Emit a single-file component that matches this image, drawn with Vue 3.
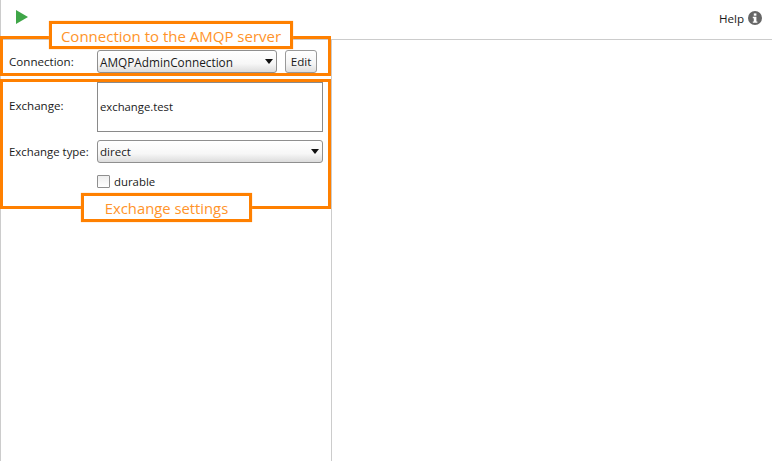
<script setup>
</script>

<template>
  <div class="app">
    <header class="toolbar">
      <svg class="play" width="14" height="16" viewBox="0 0 14 16"><path d="M1 1 L13 8 L1 15 Z" fill="#3fa648" /></svg>
      <div class="help">
        <span>Help</span>
        <svg width="14" height="14" viewBox="0 0 14 14">
          <circle cx="7" cy="7" r="7" fill="#666" />
          <rect x="5.8" y="2.4" width="2.6" height="2.3" fill="#fff" />
          <path d="M4.8 5.8h3.6v4.6h1v1.4H4.8v-1.4h1V7.2h-1z" fill="#fff" />
        </svg>
      </div>
    </header>
    <div class="body">
      <aside class="side">
        <div class="row conn">
          <label class="lbl">Connection:</label>
          <div class="combo short"><span>AMQPAdminConnection</span><i class="arrow"></i></div>
          <button class="edit">Edit</button>
        </div>
        <div class="row exch">
          <label class="lbl">Exchange:</label>
          <div class="field">exchange.test</div>
        </div>
        <div class="row type">
          <label class="lbl">Exchange type:</label>
          <div class="combo long"><span>direct</span><i class="arrow"></i></div>
        </div>
        <div class="row dur">
          <span class="check"></span>
          <span>durable</span>
        </div>
      </aside>
    </div>

    <div class="note box1"></div>
    <div class="note box2"></div>
    <div class="tag tag1">Connection to the AMQP server</div>
    <div class="tag tag2">Exchange settings</div>
  </div>
</template>

<style>
html, body { margin: 0; background: #fff; }
</style>

<style scoped>
.app {
  position: relative;
  width: 772px;
  height: 468px;
  overflow: hidden;
  background: #fff;
  color: #1a1a1a;
  font-family: "Open Sans", "Noto Sans", sans-serif;
  font-size: 11.6px;
  display: flex;
  flex-direction: column;
}
.toolbar {
  height: 39px;
  flex: none;
  box-sizing: content-box;
  border-left: 1px solid #ccc;
  border-bottom: 1px solid #ccc;
  display: flex;
  justify-content: space-between;
  align-items: flex-start;
  padding: 0 10px 0 14px;
}
.play { margin-top: 9px; }
.help {
  display: flex;
  align-items: center;
  gap: 4px;
  margin-top: 10px;
  height: 16px;
}
.body {
  flex: none;
  height: 421px;
  display: flex;
}
.side {
  width: 330px;
  box-sizing: content-box;
  border-left: 1px solid #ccc;
  border-right: 1px solid #ccc;
  display: flex;
  flex-direction: column;
}
.row { display: flex; align-items: center; padding-left: 8px; }
.lbl { width: 88px; flex: none; }
.conn { margin-top: 10px; height: 23px; }
.exch { margin-top: 9px; height: 50px; }
.exch .lbl { margin-top: -3px; }
.type { margin-top: 8px; height: 23px; }
.type .lbl { font-size: 11.4px; }
.dur { margin-top: 11px; padding-left: 96px; height: 15px; gap: 4px; font-size: 11.4px; }
.combo {
  box-sizing: border-box;
  height: 23px;
  border: 1px solid #8f8f8f;
  border-radius: 3px;
  background: linear-gradient(#ffffff 0%, #f7f7f7 60%, #dcdcdc 100%);
  display: flex;
  align-items: center;
  justify-content: space-between;
  padding: 0 3px 0 2px;
}
.short { width: 180px; font-size: 11.8px; }
.long { width: 226px; }
.arrow {
  width: 0;
  height: 0;
  border-left: 4.5px solid transparent;
  border-right: 4.5px solid transparent;
  border-top: 5px solid #111;
}
.edit {
  box-sizing: border-box;
  margin-left: 8px;
  width: 32px;
  height: 23px;
  padding: 0;
  border: 1px solid #999;
  border-radius: 3px;
  background: linear-gradient(#ffffff 0%, #f5f5f5 60%, #dedede 100%);
  font: inherit;
  color: inherit;
}
.field {
  box-sizing: border-box;
  width: 226px;
  height: 50px;
  border: 1px solid #8a8a8a;
  padding: 15px 2px 0;
  line-height: 17px;
  font-size: 11.3px;
}
.check {
  box-sizing: border-box;
  width: 13px;
  height: 13px;
  border: 1px solid #8f8f8f;
  border-radius: 1px;
  background: linear-gradient(#eeeeee, #ffffff);
}
.note {
  position: absolute;
  box-sizing: border-box;
  border: 3px solid #ff8000;
  pointer-events: none;
}
.box1 { left: 0; top: 36px; width: 331px; height: 40px; }
.box2 { left: 0; top: 79px; width: 331px; height: 130px; }
.tag {
  position: absolute;
  box-sizing: border-box;
  border: 3px solid #ff8000;
  background: #fff;
  color: #ff942a;
  font-size: 15px;
  padding-top: 1px;
  display: flex;
  align-items: center;
  justify-content: center;
  white-space: nowrap;
  box-shadow: 0 0 1px #ffb366;
}
.tag1 { left: 49px; top: 21px; width: 244px; height: 28px; }
.tag2 { left: 81px; top: 193px; width: 171px; height: 29px; font-size: 14.8px; }
</style>
